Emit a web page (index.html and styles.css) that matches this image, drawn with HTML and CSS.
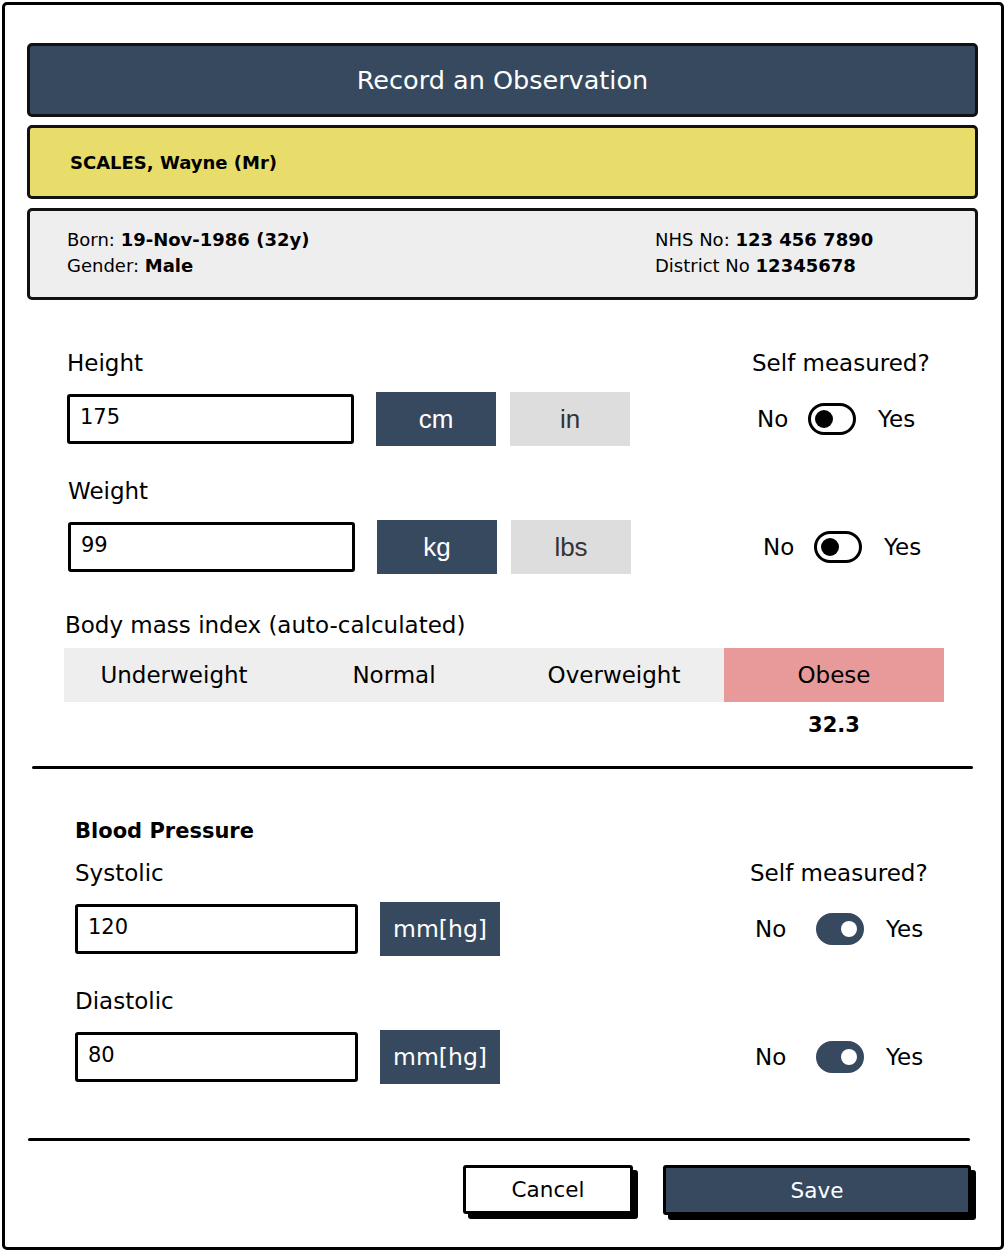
FILE: index.html
```html
<!DOCTYPE html>
<html>
<head>
<meta charset="utf-8">
<link rel="stylesheet" href="styles.css">
</head>
<body>
<div class="frame">
  <div class="title">Record an Observation</div>
  <div class="patient">SCALES, Wayne (Mr)</div>
  <div class="info">
    <div class="info-col">
      <div>Born: <b>19-Nov-1986 (32y)</b></div>
      <div>Gender: <b>Male</b></div>
    </div>
    <div class="info-col info-right">
      <div>NHS No: <b>123 456 7890</b></div>
      <div>District No <b>12345678</b></div>
    </div>
  </div>

  <div class="row label-row row-h1">
    <span class="left-col lc-h1">Height</span>
    <span>Self measured?</span>
  </div>
  <div class="row input-row row-h1">
    <div class="left-col lc-h1t">
      <div class="input in-h1">175</div>
      <div class="unit on u-arial">cm</div>
      <div class="unit off u-arial">in</div>
    </div>
    <div class="toggle-group">
      <span class="tg-no">No</span><span class="toggle"><i></i></span><span>Yes</span>
    </div>
  </div>

  <div class="row label-row row-w">
    <span>Weight</span>
  </div>
  <div class="row input-row row-w">
    <div class="left-col lc-wt">
      <div class="input in-h1">99</div>
      <div class="unit on u-arial">kg</div>
      <div class="unit off u-arial">lbs</div>
    </div>
    <div class="toggle-group">
      <span class="tg-no">No</span><span class="toggle"><i></i></span><span>Yes</span>
    </div>
  </div>

  <div class="bmi-label">Body mass index (auto-calculated)</div>
  <div class="bmi-bar">
    <div class="bmi-cell">Underweight</div>
    <div class="bmi-cell">Normal</div>
    <div class="bmi-cell">Overweight</div>
    <div class="bmi-cell obese">Obese</div>
  </div>
  <div class="bmi-value-row">
    <div class="bmi-value">32.3</div>
  </div>

  <div class="divider div1"></div>

  <div class="bp-title">Blood Pressure</div>
  <div class="row label-row row-bp sys-label">
    <span class="left-col lc-bp">Systolic</span>
    <span>Self measured?</span>
  </div>
  <div class="row input-row row-bp">
    <div class="left-col lc-bpt">
      <div class="input in-bp">120</div>
      <div class="unit on">mm[hg]</div>
    </div>
    <div class="toggle-group bp-tg">
      <span class="tg-no">No</span><span class="toggle active"><i></i></span><span>Yes</span>
    </div>
  </div>
  <div class="row label-row row-bp dia-label">
    <span>Diastolic</span>
  </div>
  <div class="row input-row row-bp">
    <div class="left-col lc-bpt">
      <div class="input in-bp">80</div>
      <div class="unit on">mm[hg]</div>
    </div>
    <div class="toggle-group bp-tg">
      <span class="tg-no">No</span><span class="toggle active"><i></i></span><span>Yes</span>
    </div>
  </div>

  <div class="divider div2"></div>

  <div class="actions">
    <div class="btn cancel">Cancel</div>
    <div class="btn save">Save</div>
  </div>
</div>
</body>
</html>
```

FILE: styles.css
```css
* { box-sizing: border-box; }
html, body { margin: 0; padding: 0; background: #fff; }
body {
  font-family: "DejaVu Sans", "Open Sans", sans-serif;
  color: #000;
  width: 1006px;
  height: 1254px;
  overflow: hidden;
}
.frame {
  margin: 2px 0 0 2px;
  width: 1002px;
  height: 1248px;
  border: 3px solid #000;
  border-radius: 5px;
}
.title {
  margin: 38px 23px 0 22px;
  height: 74px;
  background: #37495e;
  border: 3px solid #111;
  border-radius: 5px;
  color: #fff;
  font-size: 25.5px;
  display: flex;
  align-items: center;
  justify-content: center;
}
.patient {
  margin: 8px 23px 0 22px;
  height: 74px;
  background: #e8dc6b;
  border: 3px solid #111;
  border-radius: 5px;
  font-size: 18px;
  font-weight: 700;
  display: flex;
  align-items: center;
  padding-left: 40px;
}
.info {
  margin: 9px 23px 0 22px;
  height: 92px;
  background: #eeeeee;
  border: 3px solid #111;
  border-radius: 5px;
  display: flex;
  padding: 16px 0 0 37px;
  font-size: 18px;
  line-height: 26px;
}
.info-col { width: 588px; }
.info-right { width: auto; }

.row { display: flex; align-items: center; font-size: 23px; }
.label-row { height: 26px; line-height: 26px; }
.row-h1 { padding-left: 62px; }
.row-w { padding-left: 63px; }
.row-bp { padding-left: 70px; }
.row-h1.label-row { margin-top: 50px; }
.row-w.label-row { margin-top: 32px; }
.input-row { height: 54px; margin-top: 16px; }
.left-col { display: flex; align-items: center; flex: none; }
.lc-h1 { width: 685px; }
.lc-h1t { width: 690px; }
.lc-wt { width: 695px; }
.lc-bp { width: 675px; }
.lc-bpt { width: 680px; }
.sys-label { margin-top: 16px; }
.dia-label { margin-top: 32px; }

.input {
  height: 50px;
  border: 3px solid #000;
  border-radius: 3px;
  padding-left: 10px;
  display: flex;
  align-items: center;
  font-size: 21px;
  padding-bottom: 5px;
}
.in-h1 { width: 287px; margin-right: 22px; }
.in-bp { width: 283px; margin-right: 22px; }
.unit {
  width: 120px;
  height: 54px;
  display: flex;
  align-items: center;
  justify-content: center;
  font-size: 23.5px;
}
.u-arial { font-family: "Liberation Sans", Arial, sans-serif; font-size: 26px; }
.unit.on { background: #37495e; color: #fff; }
.unit.off { background: #dddddd; color: #333; margin-left: 14px; }

.toggle-group { display: flex; align-items: center; font-size: 23px; }
.tg-no { width: 32px; }
.toggle {
  width: 48px;
  height: 32px;
  border: 3.5px solid #000;
  border-radius: 16px;
  margin: 0 22px 0 19px;
  display: flex;
  align-items: center;
  padding-left: 4px;
}
.toggle i {
  display: block;
  width: 18px;
  height: 18px;
  border-radius: 50%;
  background: #000;
}
.bp-tg .toggle { margin: 0 22px 0 29px; }
.toggle.active {
  background: #37495e;
  border-color: #37495e;
  justify-content: flex-end;
  padding: 0 4px 0 0;
}
.toggle.active i { background: #fff; width: 16px; height: 16px; }

.bmi-label {
  margin: 38px 0 0 60px;
  font-size: 23px;
  height: 26px;
  line-height: 26px;
}
.bmi-bar {
  margin: 10px 0 0 59px;
  width: 880px;
  height: 54px;
  display: flex;
  background: #eeeeee;
}
.bmi-cell {
  width: 220px;
  display: flex;
  align-items: center;
  justify-content: center;
  font-size: 23px;
}
.bmi-cell.obese { background: #e89a9a; }
.bmi-value-row {
  margin: 10px 0 0 719px;
  width: 220px;
  height: 26px;
  line-height: 26px;
  text-align: center;
  font-weight: 700;
  font-size: 21px;
}
.divider {
  height: 3px;
  background: #000;
  border-radius: 2px;
}
.div1 { margin: 28px 0 0 27px; width: 941px; }
.div2 { margin: 54px 0 0 23px; width: 942px; }
.bp-title {
  margin: 49px 0 0 70px;
  font-size: 21px;
  font-weight: 700;
  height: 26px;
  line-height: 26px;
}
.actions {
  display: flex;
  justify-content: flex-end;
  margin-top: 24px;
  padding-right: 30px;
  gap: 30px;
}
.btn {
  height: 50px;
  border: 3px solid #000;
  border-radius: 3px;
  box-shadow: 5px 5px 0 #000;
  display: flex;
  align-items: center;
  justify-content: center;
  font-size: 21.5px;
}
.cancel { width: 170px; background: #fff; height: 49px; }
.save { width: 308px; background: #37495e; color: #fff; }
```
